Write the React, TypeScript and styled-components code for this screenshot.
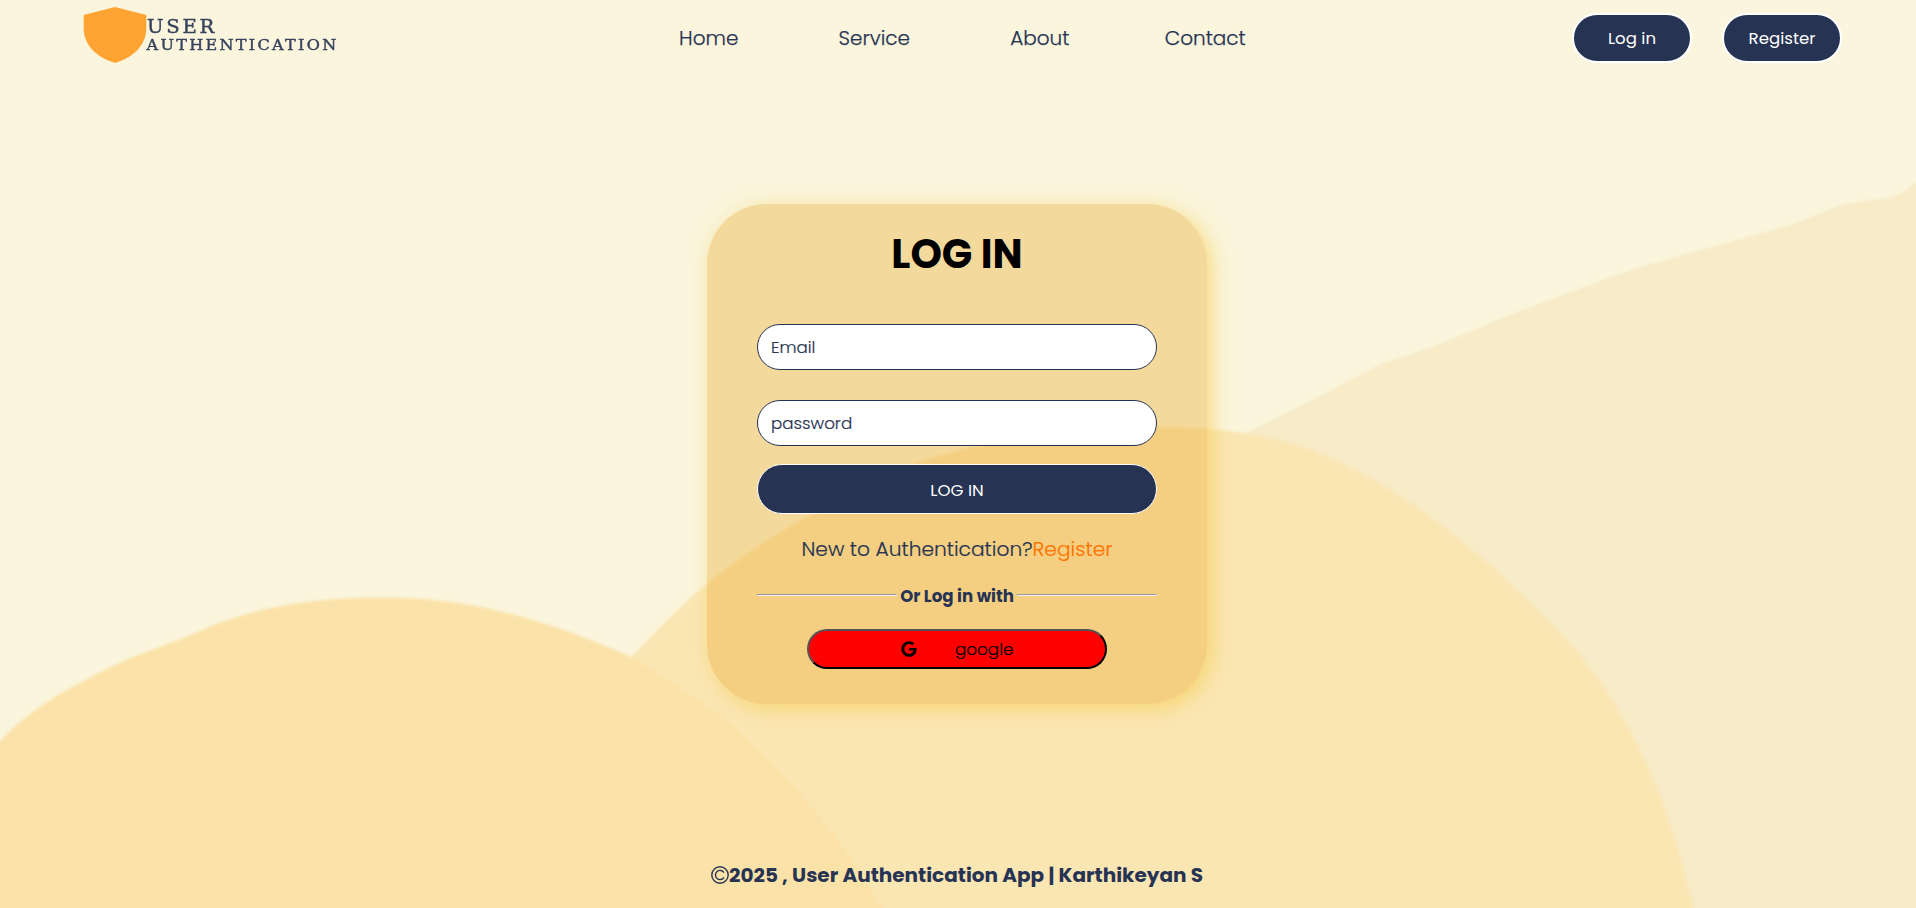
import React from "react";
import styled, { createGlobalStyle } from "styled-components";
import { FaGoogle } from "react-icons/fa";

const navy = "#263353";

const GlobalStyle = createGlobalStyle`
  * { box-sizing: border-box; margin: 0; padding: 0; }
  body {
    font-family: Poppins, Inter, "Open Sans", sans-serif;
    font-feature-settings: "cv11" 1;
    background: #faf5dc;
    color: ${navy};
    overflow: hidden;
  }
`;

const Page = styled.div`
  position: relative;
  isolation: isolate;
  display: flex;
  flex-direction: column;
  height: 100vh;
  overflow: hidden;
`;

const Hills = styled.svg`
  position: absolute;
  inset: 0;
  width: 100%;
  height: 100%;
  z-index: -1;
`;

const Header = styled.header`
  display: flex;
  align-items: flex-start;
  justify-content: space-between;
  height: 76px;
  padding: 0 74px 0 80px;
`;

const Logo = styled.svg`
  width: 262px;
  height: 76px;
  flex: none;
`;

const Nav = styled.nav`
  display: grid;
  grid-template-columns: repeat(4, 165.5px);
`;

const NavLink = styled.a`
  font-size: 20px;
  font-weight: 300;
  line-height: 77px;
  text-align: center;
  -webkit-text-stroke: 0.25px;
`;

const Actions = styled.div`
  display: flex;
  gap: 30px;
  padding-top: 13px;
`;

const PillButton = styled.button`
  width: 120px;
  height: 50px;
  border: 2px solid #fff;
  border-radius: 25px;
  background: ${navy};
  color: #fff;
  font: inherit;
  font-size: 16.6px;
`;

const Card = styled.main`
  display: flex;
  flex-direction: column;
  align-items: center;
  width: 500px;
  height: 500px;
  margin: 128px 0 0 707px;
  padding: 0 50px;
  border-radius: 60px;
  background: rgba(232, 164, 32, 0.34);
  box-shadow: 5px 5px 20px rgba(246, 205, 80, 0.65);
`;

const Title = styled.h1`
  height: 120px;
  color: #000;
  font-size: 40px;
  font-weight: 700;
  line-height: 101px;
`;

const Field = styled.input`
  width: 400px;
  height: 46px;
  flex: none;
  margin-bottom: 30px;
  padding: 0 13px;
  border: 1px solid ${navy};
  border-radius: 23px;
  background: #fff;
  font: inherit;
  font-size: 16.7px;
  font-weight: 300;
  -webkit-text-stroke: 0.2px;
  &::placeholder { color: ${navy}; opacity: 1; }
`;

const Submit = styled(PillButton)`
  width: 400px;
  flex: none;
  margin-top: -12px;
  padding-top: 2px;
  border-width: 1px;
`;

const Prompt = styled.p`
  margin-top: 20px;
  font-size: 20.2px;
  font-weight: 300;
  line-height: 30px;
  white-space: nowrap;
  -webkit-text-stroke: 0.2px;
`;

const RegisterLink = styled.a`
  color: #ff7300;
`;

const Divider = styled.div`
  display: flex;
  align-items: flex-start;
  justify-content: space-between;
  width: 400px;
  height: 24px;
  margin-top: 20px;
`;

const Rule = styled.hr`
  width: 140px;
  margin-top: 10px;
  border: 1px inset #eee;
`;

const DividerText = styled.h5`
  font-size: 16.6px;
  font-weight: 700;
  line-height: 25px;
  white-space: nowrap;
`;

const GoogleButton = styled.button`
  display: flex;
  align-items: center;
  width: 300px;
  height: 40px;
  margin-top: 21px;
  padding-left: 92px;
  border: 2px outset #000;
  border-radius: 20px;
  background: #f00;
  color: #000;
  font: inherit;
  font-size: 16.8px;
  font-weight: 300;
  -webkit-text-stroke: 0.2px;
  svg { margin-right: 38px; }
`;

const Footer = styled.footer`
  display: flex;
  align-items: center;
  height: 30px;
  margin: 156px 0 0 711px;
  font-size: 20px;
  font-weight: 700;
  white-space: nowrap;
`;

const CopyrightMark = styled.svg`
  width: 18px;
  height: 18px;
  fill: none;
  stroke: ${navy};
  stroke-width: 1.4;
`;

const HILL_RIGHT =
  "M1240 436 L1250 431 L1314 399 L1383 363 Q1415 354 1447 341 L1520 311 L1611 277 Q1655 262 1702 250 L1794 224 L1839 206 Q1862 200 1885 199 Q1900 197 1920 179 V912 H1240Z";
const HILL_MIDDLE =
  "M620 664 L631 657 C650 638 668 618 697 592 C740 556 780 530 820 510 C870 484 905 466 938 456 C1000 438 1060 430 1158 427 C1230 427 1280 438 1315 451 C1370 474 1410 501 1435 520 C1490 560 1540 612 1572 645 C1640 725 1673 815 1695 915 H620Z";
const HILL_LEFT =
  "M-5 747 C20 718 50 698 86 680 C125 658 155 649 184 638 C250 606 315 597.5 385 597.5 C480 598 560 625 631 657 C700 697 735 725 765 755 C815 807 850 850 887 915 H-5Z";

export default function App() {
  return (
    <Page>
      <GlobalStyle />
      <Hills viewBox="0 0 1916 908" preserveAspectRatio="none" aria-hidden="true">
        <defs>
          <filter id="soft" x="-5%" y="-5%" width="110%" height="110%">
            <feGaussianBlur stdDeviation="1.5" />
          </filter>
        </defs>
        <g filter="url(#soft)">
          <path d={HILL_RIGHT} fill="#f7ebc8" />
          <path d={HILL_MIDDLE} fill="#fae6b3" />
          <path d={HILL_LEFT} fill="#fbe2a8" />
        </g>
      </Hills>

      <Header>
        <Logo viewBox="0 0 262 76">
          <path
            d="M35 7 L66.3 15 V28 C66.3 45 54 57 35 63 C16 57 3.7 45 3.7 28 V15Z"
            fill="#ffa433"
          />
          <g
            fill={navy}
            stroke={navy}
            strokeWidth="0.4"
            fontFamily="'DejaVu Serif', serif"
            opacity="0.92"
          >
            <text x="67" y="33" fontSize="18" letterSpacing="2.5" textLength="70" lengthAdjust="spacingAndGlyphs">
              USER
            </text>
            <text x="66.5" y="50" fontSize="14" letterSpacing="2" textLength="192" lengthAdjust="spacingAndGlyphs">
              AUTHENTICATION
            </text>
          </g>
        </Logo>
        <Nav>
          <NavLink>Home</NavLink>
          <NavLink>Service</NavLink>
          <NavLink>About</NavLink>
          <NavLink>Contact</NavLink>
        </Nav>
        <Actions>
          <PillButton>Log in</PillButton>
          <PillButton>Register</PillButton>
        </Actions>
      </Header>

      <Card>
        <Title>LOG IN</Title>
        <Field placeholder="Email" />
        <Field placeholder="password" />
        <Submit>LOG IN</Submit>
        <Prompt>
          New to Authentication?<RegisterLink>Register</RegisterLink>
        </Prompt>
        <Divider>
          <Rule />
          <DividerText>Or Log in with</DividerText>
          <Rule />
        </Divider>
        <GoogleButton>
          <FaGoogle size={16} />
          google
        </GoogleButton>
      </Card>

      <Footer>
        <CopyrightMark viewBox="0 0 18 18" aria-hidden="true">
          <circle cx="9" cy="9" r="8.2" />
          <path d="M13 6.6 A4.6 4.6 0 1 0 13 11.4" />
        </CopyrightMark>
        2025 , User Authentication App | Karthikeyan S
      </Footer>
    </Page>
  );
}
